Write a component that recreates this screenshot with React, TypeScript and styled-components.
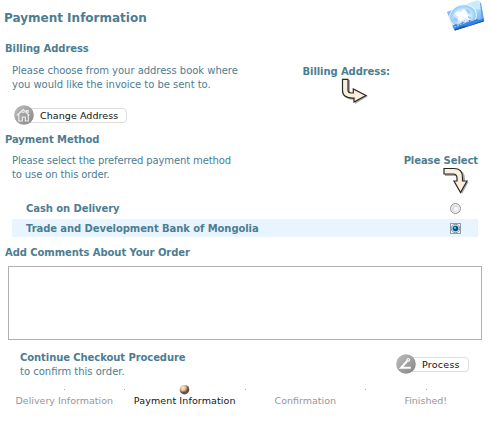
import React from "react";
import styled, { createGlobalStyle } from "styled-components";

const GlobalStyle = createGlobalStyle`
  * { box-sizing: border-box; }
  body {
    margin: 0;
    background: #fff;
    color: #4d7d92;
    font: 10px/13px Verdana, "DejaVu Sans", sans-serif;
  }
`;

const Page = styled.main`
  width: 490px;
  height: 425px;
  overflow: hidden;
  display: flex;
  flex-direction: column;
`;
const Header = styled.header`
  display: flex;
  justify-content: space-between;
  height: 42px;
  padding: 0 5px 0 4px;
`;
const Title = styled.h1`
  margin: 10px 0 0;
  font-size: 12px;
  line-height: 16px;
  white-space: nowrap;
`;
const SectionTitle = styled.h2`
  margin: 0;
  padding-left: 5px;
  height: 20px;
  font-size: 10px;
  line-height: 14px;
  white-space: nowrap;
  letter-spacing: -0.07px;
`;
const Row = styled.div<{ $height: number }>`
  display: flex;
  justify-content: space-between;
  height: ${(p) => p.$height}px;
  padding: 0 12px;
`;
const Copy = styled.p<{ $top?: number; $track: number }>`
  margin: ${(p) => p.$top ?? 2}px 0 0;
  line-height: 13.5px;
  white-space: nowrap;
  letter-spacing: ${(p) => p.$track}px;
`;
const Strong = styled.strong`
  display: block;
  white-space: nowrap;
  letter-spacing: -0.08px;
`;
const Pointer = styled.div<{ $right: number; $top: number; $inset?: number }>`
  display: flex;
  flex-direction: column;
  align-items: flex-end;
  padding-top: ${(p) => p.$top}px;
  margin-right: ${(p) => p.$right}px;
  svg { margin-right: ${(p) => p.$inset ?? 0}px; }
`;
const ActionButton = styled.button<{ $width: number }>`
  display: flex;
  align-items: center;
  width: ${(p) => p.$width}px;
  height: 20px;
  padding: 0;
  border: 0;
  background: none;
  color: #111;
  font: 9.5px/14px Verdana, "DejaVu Sans", sans-serif;
  svg { flex: none; z-index: 1; }
`;
const Pill = styled.span<{ $track: number }>`
  flex: 1;
  height: 15px;
  margin-left: -8px;
  padding-left: 13px;
  border: 1px solid #ddd;
  border-radius: 4px;
  line-height: 13px;
  text-align: left;
  white-space: nowrap;
  letter-spacing: ${(p) => p.$track}px;
`;
const ButtonLine = styled.div`
  height: 28px;
  padding-left: 14px;
`;
const Option = styled.label<{ $selected?: boolean }>`
  display: flex;
  align-items: center;
  justify-content: space-between;
  height: ${(p) => (p.$selected ? 18 : 22)}px;
  margin: 0 12px;
  padding: 0 16px 0 14px;
  background: ${(p) => (p.$selected ? "#e8f4ff" : "transparent")};
`;
const Comments = styled.textarea`
  display: block;
  flex: none;
  width: 474px;
  height: 74px;
  margin: 0 0 0 8px;
  border: 1px solid #b0b0b0;
  background: #fff;
  resize: none;
  outline: 0;
`;
const Continue = styled.section`
  display: flex;
  justify-content: space-between;
  height: 46px;
  padding: 11px 21px 0 20px;
`;
const ContinueText = styled.div`
  display: flex;
  flex-direction: column;
  gap: 1px;
  white-space: nowrap;
`;
const ProcessSlot = styled.div`
  padding-top: 3px;
`;
const Steps = styled.nav`
  display: grid;
  grid-template-columns: repeat(4, 120.5px);
  padding-left: 4px;
`;
const Step = styled.div<{ $active?: boolean; $track: number }>`
  display: flex;
  flex-direction: column;
  align-items: center;
  color: ${(p) => (p.$active ? "#151515" : "#969696")};
  font-size: 9.5px;
  line-height: 12px;
  white-space: nowrap;
  letter-spacing: ${(p) => p.$track}px;
`;
const Track = styled.svg`
  display: block;
  width: 100%;
  height: 9px;
  overflow: visible;
`;

function GlobeCard() {
  return (
    <svg width="39" height="32" viewBox="0 0 39 32">
      <defs>
        <linearGradient id="card" x1="0" y1="0" x2="1" y2="1">
          <stop offset="0" stopColor="#4f91eb" />
          <stop offset=".5" stopColor="#b9e2fb" />
          <stop offset="1" stopColor="#4a8ae6" />
        </linearGradient>
        <radialGradient id="globe">
          <stop offset="0" stopColor="#f4fbff" />
          <stop offset=".6" stopColor="#cae8fd" />
          <stop offset="1" stopColor="#8cc3f6" />
        </radialGradient>
      </defs>
      <path d="M1 12 31 .5 34.5 2 38 21 9 30.5 7 28Z" fill="url(#card)" />
      <path d="M8 9 31 .5 34.5 2 36 10 24 8Z" fill="#c7edfd" />
      <path d="M34 3 35 3 38 20 36 20Z" fill="#5c9eee" />
      <ellipse cx="17" cy="16" rx="13.5" ry="11" transform="rotate(-15 17 16)" fill="url(#globe)" stroke="#eaf8ff" />
      <path d="m8 14 3-3 4 1 2-3 4 2-1 3 5 3-2 3-4-2-4 4-3-3 1-2Z" fill="#fff" opacity=".85" />
      <path d="m19 9 4 1 2 4-3-1Z M8 17l4 2-1 3-4-1Z M22 16l3 1v2l-3-1Z" fill="#9acbf7" />
      <path d="m6.5 26 3-2 3 1 4-3 3 1 4-3 3 1 4-2 3 1 4-2 .5 3L9 30.5Z" fill="#3d82e0" />
      <path d="m8 29.5 8-3 7-1 14.5-5 .5 1L9 30.5Z" fill="#1450b4" />
      <path d="m8 27 5-1.5M14 24.5l6-1.8M21 22l5-1.5M15 21.5l4-1" stroke="#bccfd4" strokeWidth="1" strokeDasharray="2 1" />
    </svg>
  );
}

function RightArrow() {
  return (
    <svg width="27" height="27" viewBox="0 0 27 27">
      <path d="M3 2h6v11q0 2 3 2h1v-4l14 7-13 8v-4Q3 22 3 14Z" fill="#aaa" />
      <path d="M1.5 1.3h5.5v11q0 2.7 3.5 2.7h1.8v-4L25 17.5 13 24v-4Q1.5 20.5 1.5 12.5Z" fill="#fbefdc" stroke="#292929" strokeWidth="1.2" />
    </svg>
  );
}
function DownArrow() {
  return (
    <svg width="27" height="27" viewBox="0 0 27 27">
      <path d="M3 3h12q8 0 8 9v3h3.5L20 27l-7-12h3v-3q0-3-4-3H3Z" fill="#aaa" />
      <path d="M2 1.5h10q8.5 0 8.5 9v3.5H25L18.5 25.5 12 14h3v-3q0-4-4-4H2Z" fill="#fbefdc" stroke="#292929" strokeWidth="1.2" />
    </svg>
  );
}
function RoundIcon({ kind }: { kind: "home" | "process" }) {
  return (
    <svg width="20" height="20" viewBox="0 0 20 20">
      <defs>
        <linearGradient id={kind} x1="0" y1="0" x2="1" y2="1">
          <stop stopColor="#bebebe" />
          <stop offset="1" stopColor="#858585" />
        </linearGradient>
      </defs>
      <circle cx="10" cy="10" r="9.8" fill={`url(#${kind})`} />
      {kind === "home" ? (
        <g fill="none" stroke="#f1f1f1" strokeWidth="1.1">
          <path d="m2.8 10.5 6.5-6 6 6M4.8 9v7h3.5v-4h3v4h3V9M12.5 7V5.5h1.7V8" />
          <path d="m7 8 2-2 2 2Z" fill="#ddd" stroke="none" />
        </g>
      ) : (
        <g fill="none" stroke="#fff" strokeWidth="1.7">
          <path d="m11.2 7-6.2 6.8h9.8" strokeWidth="2" />
          <circle cx="12.2" cy="5.8" r="1.3" strokeWidth="1.2" />
        </g>
      )}
    </svg>
  );
}
function Radio({ checked = false }: { checked?: boolean }) {
  return (
    <svg width="13" height="13" viewBox="0 0 13 13">
      {checked && <rect x="1.5" y="1.5" width="10" height="10" fill="none" stroke="#404040" strokeDasharray="1 1" />}
      <circle cx="6.5" cy="6.5" r={checked ? 4.2 : 5} fill="#eee" stroke={checked ? "#8794a0" : "#969696"} />
      <circle cx="6.5" cy="6.5" r="3.5" fill={checked ? "#b5d5e6" : "#ddd"} />
      {checked ? (
        <>
          <circle cx="6.5" cy="6.5" r="2.8" fill="#075783" />
          <circle cx="6" cy="5.9" r="1.1" fill="#54c4f1" />
        </>
      ) : (
        <circle cx="7" cy="7" r="2.2" fill="#f5f5f5" />
      )}
    </svg>
  );
}

export default function App() {
  return (
    <>
      <GlobalStyle />
      <Page>
        <Header><Title>Payment Information</Title><GlobeCard /></Header>
        <SectionTitle>Billing Address</SectionTitle>
        <Row $height={43}>
          <Copy $track={-0.03}>Please choose from your address book where<br />you would like the invoice to be sent to.</Copy>
          <Pointer $right={88} $top={3} $inset={22}>
            <Strong>Billing Address:</Strong><RightArrow />
          </Pointer>
        </Row>
        <ButtonLine>
          <ActionButton $width={113}><RoundIcon kind="home" /><Pill $track={0.08}>Change Address</Pill></ActionButton>
        </ButtonLine>
        <SectionTitle>Payment Method</SectionTitle>
        <Row $height={44}>
          <Copy $top={1} $track={-0.12}>Please select the preferred payment method<br />to use on this order.</Copy>
          <Pointer $right={0} $top={1} $inset={9}>
            <Strong>Please Select</Strong><DownArrow />
          </Pointer>
        </Row>
        <Option><Strong>Cash on Delivery</Strong><Radio /></Option>
        <Option $selected><Strong>Trade and Development Bank of Mongolia</Strong><Radio checked /></Option>
        <Row $height={9} />
        <SectionTitle>Add Comments About Your Order</SectionTitle>
        <Comments aria-label="Order comments" />
        <Continue>
          <ContinueText><Strong>Continue Checkout Procedure</Strong><span>to confirm this order.</span></ContinueText>
          <ProcessSlot>
            <ActionButton $width={73}><RoundIcon kind="process" /><Pill $track={0.25}>Process</Pill></ActionButton>
          </ProcessSlot>
        </Continue>
        <Steps>
          <Step $track={0}><Track><path d="M60 3.5h1M120 3.5h1" stroke="#aaa" /></Track>Delivery Information</Step>
          <Step $active $track={0.12}>
            <Track>
              <defs><radialGradient id="bead" cx=".35" cy=".3"><stop stopColor="#fff0dc" /><stop offset=".6" stopColor="#d8b592" /><stop offset="1" stopColor="#69503e" /></radialGradient></defs>
              <circle cx="59.5" cy="3.7" r="4.8" fill="url(#bead)" /><path d="M120 3.5h1" stroke="#aaa" />
            </Track>Payment Information
          </Step>
          <Step $track={0}><Track><path d="M120 3.5h1" stroke="#aaa" /></Track>Confirmation</Step>
          <Step $track={0}><Track><path d="M60 3.5h1" stroke="#aaa" /></Track>Finished!</Step>
        </Steps>
      </Page>
    </>
  );
}
